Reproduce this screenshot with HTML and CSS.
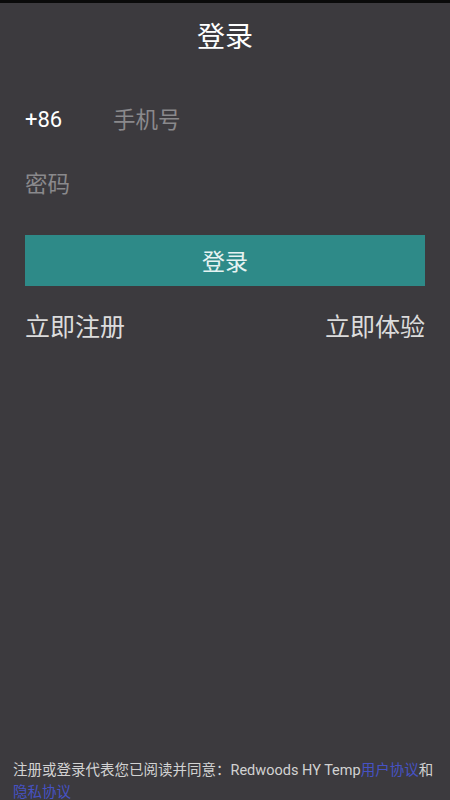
FILE: index.html
```html
<!DOCTYPE html>
<html lang="zh-CN">
<head>
<meta charset="utf-8">
<title>登录</title>
<link rel="stylesheet" href="styles.css">
</head>
<body>
<div class="page">
  <header class="header">登录</header>
  <main class="form">
    <div class="row">
      <span class="code">+86</span>
      <span class="placeholder">手机号</span>
    </div>
    <div class="row">
      <span class="placeholder">密码</span>
    </div>
    <button class="btn">登录</button>
    <div class="links">
      <span>立即注册</span>
      <span>立即体验</span>
    </div>
  </main>
  <footer class="footer">注册或登录代表您已阅读并同意：<span class="latin">Redwoods HY Temp</span><span class="link">用户协议</span>和<span class="link">隐私协议</span></footer>
</div>
</body>
</html>
```
FILE: styles.css
```css
html, body {
  margin: 0;
  padding: 0;
  background: #3c3a3e;
}
body {
  font-family: "Noto Sans CJK SC", "Noto Sans", sans-serif;
}
.page {
  height: 800px;
  overflow: hidden;
  display: flex;
  flex-direction: column;
  border-top: 3px solid #0a0a0a;
  box-sizing: border-box;
}
.header {
  height: 64px;
  line-height: 64px;
  text-align: center;
  color: #ffffff;
  font-size: 28px;
}
.form {
  padding: 0 25px;
  margin-top: 21px;
  display: flex;
  flex-direction: column;
}
.row {
  height: 64px;
  display: flex;
  align-items: center;
}
.code {
  width: 88px;
  color: #ffffff;
  font-family: Roboto, "Noto Sans", sans-serif;
  font-size: 22px;
  line-height: 30px;
}
.placeholder {
  color: #8a898c;
  font-size: 22.5px;
  line-height: 30px;
  margin-top: -4px;
}
.btn {
  margin-top: 19px;
  height: 51px;
  border: none;
  background: #2e8a88;
  color: #e6f3f2;
  font-family: "Noto Sans CJK SC", sans-serif;
  font-size: 23px;
  line-height: 30px;
  padding: 0 0 2px;
}
.links {
  margin-top: 22px;
  display: flex;
  justify-content: space-between;
  color: #dcdcdc;
  font-size: 25px;
  line-height: 34px;
}
.footer {
  margin-top: auto;
  margin-bottom: -1px;
  padding: 0 13px;
  font-size: 14.5px;
  line-height: 20px;
  color: #d2d2d2;
}
.latin {
  font-family: Roboto, "Noto Sans", sans-serif;
  font-size: 14.5px;
}
.link {
  color: #4652c4;
}
```
